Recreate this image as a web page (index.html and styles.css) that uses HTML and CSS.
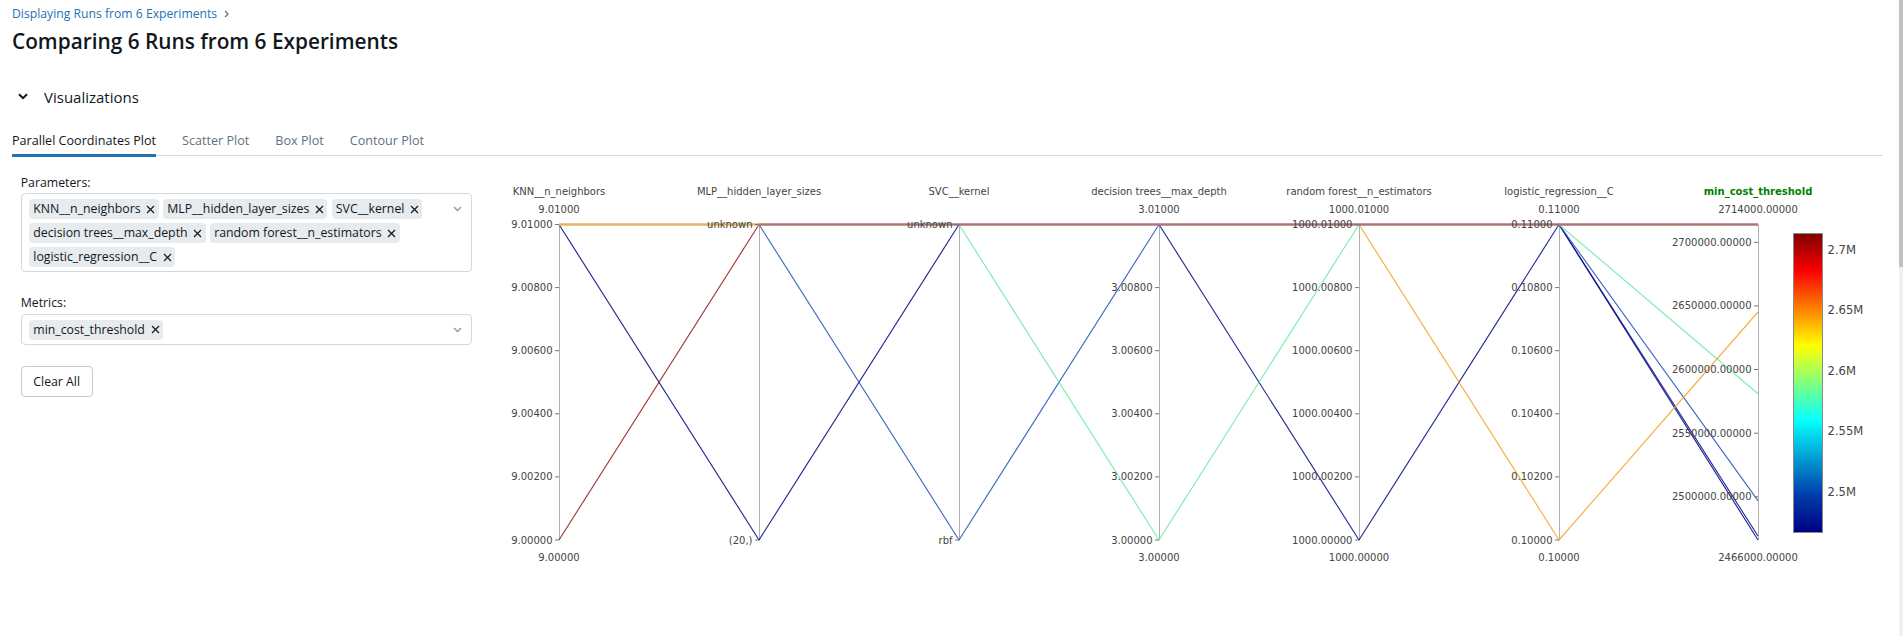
FILE: index.html
```html
<!DOCTYPE html>
<html>
<head>
<meta charset="utf-8">
<link rel="stylesheet" href="styles.css">
</head>
<body>
<div class="app">
  <main class="page">
    <nav class="breadcrumb">
      <span class="breadcrumb-link">Displaying Runs from 6 Experiments</span>
      <svg class="crumb-chev" width="5" height="8" viewBox="0 0 5 8"><path d="M1 1 L4 4 L1 7" /></svg>
    </nav>
    <h1 class="title">Comparing 6 Runs from 6 Experiments</h1>
    <div class="section-header">
      <svg class="section-chev" width="10" height="7" viewBox="0 0 10 7"><path d="M1 1.2 L5 5.2 L9 1.2" /></svg>
      <span class="section-title">Visualizations</span>
    </div>
    <div class="tabs">
      <div class="tab active">Parallel Coordinates Plot</div>
      <div class="tab">Scatter Plot</div>
      <div class="tab">Box Plot</div>
      <div class="tab">Contour Plot</div>
    </div>
    <div class="content">
      <aside class="controls">
        <div class="field-label">Parameters:</div>
        <div class="select">
          <div class="chips">
            <span class="chip">KNN__n_neighbors<svg class="x" width="9" height="9" viewBox="0 0 9 9"><path d="M1 1 L8 8 M8 1 L1 8"/></svg></span>
            <span class="chip">MLP__hidden_layer_sizes<svg class="x" width="9" height="9" viewBox="0 0 9 9"><path d="M1 1 L8 8 M8 1 L1 8"/></svg></span>
            <span class="chip">SVC__kernel<svg class="x" width="9" height="9" viewBox="0 0 9 9"><path d="M1 1 L8 8 M8 1 L1 8"/></svg></span>
            <span class="chip">decision trees__max_depth<svg class="x" width="9" height="9" viewBox="0 0 9 9"><path d="M1 1 L8 8 M8 1 L1 8"/></svg></span>
            <span class="chip">random forest__n_estimators<svg class="x" width="9" height="9" viewBox="0 0 9 9"><path d="M1 1 L8 8 M8 1 L1 8"/></svg></span>
            <span class="chip">logistic_regression__C<svg class="x" width="9" height="9" viewBox="0 0 9 9"><path d="M1 1 L8 8 M8 1 L1 8"/></svg></span>
          </div>
          <div class="caret"><svg width="9" height="6" viewBox="0 0 9 6"><path d="M1 1 L4.5 4.5 L8 1"/></svg></div>
        </div>
        <div class="field-label metrics-label">Metrics:</div>
        <div class="select">
          <div class="chips">
            <span class="chip">min_cost_threshold<svg class="x" width="9" height="9" viewBox="0 0 9 9"><path d="M1 1 L8 8 M8 1 L1 8"/></svg></span>
          </div>
          <div class="caret"><svg width="9" height="6" viewBox="0 0 9 6"><path d="M1 1 L4.5 4.5 L8 1"/></svg></div>
        </div>
        <button class="btn">Clear All</button>
      </aside>
      <svg class="plot" width="1403" height="420" viewBox="480 170 1403 420">
        <defs>
          <linearGradient id="jet" x1="0" y1="0" x2="0" y2="1">
            <stop offset="0" stop-color="rgb(128,0,0)"/>
            <stop offset="0.125" stop-color="rgb(250,0,0)"/>
            <stop offset="0.375" stop-color="rgb(255,255,0)"/>
            <stop offset="0.625" stop-color="rgb(5,255,255)"/>
            <stop offset="0.875" stop-color="rgb(0,60,170)"/>
            <stop offset="1" stop-color="rgb(0,0,131)"/>
          </linearGradient>
        </defs>

        <g class="axis-lines">
          <line x1="559.5" y1="224.5" x2="559.5" y2="540"/>
          <line x1="759.5" y1="224.5" x2="759.5" y2="540"/>
          <line x1="959.5" y1="224.5" x2="959.5" y2="540"/>
          <line x1="1159.5" y1="224.5" x2="1159.5" y2="540"/>
          <line x1="1359.5" y1="224.5" x2="1359.5" y2="540"/>
          <line x1="1559.5" y1="224.5" x2="1559.5" y2="540"/>
          <line x1="1758.5" y1="224.5" x2="1758.5" y2="540"/>
        </g>

        <g class="runs">
          <polyline stroke="rgb(0,0,131)" points="559,224.5 759,540 959,224.5 1159,224.5 1359,224.5 1559,224.5 1758,540"/>
          <polyline stroke="rgb(0,8,136)" points="559,224.5 759,224.5 959,224.5 1159,224.5 1359,540 1559,224.5 1758,536"/>
          <polyline stroke="rgb(30,80,185)" points="559,224.5 759,224.5 959,540 1159,224.5 1359,224.5 1559,224.5 1758,500.7"/>
          <polyline stroke="rgb(100,235,165)" points="559,224.5 759,224.5 959,224.5 1159,540 1359,224.5 1559,224.5 1758,393.7"/>
          <polyline stroke="rgb(245,160,30)" points="559,224.5 759,224.5 959,224.5 1159,224.5 1359,224.5 1559,540 1758,312"/>
          <polyline stroke="rgb(150,20,20)" points="559,540 759,224.5 959,224.5 1159,224.5 1359,224.5 1559,224.5 1758,224.5"/>
        </g>
        <g class="top-lines">
          <line stroke="rgb(226,180,100)" x1="559" y1="224.5" x2="759" y2="224.5"/>
          <line stroke="rgb(170,118,118)" x1="759" y1="224.5" x2="1758" y2="224.5"/>
        </g>

        <g class="ticks">
          <path d="M555 224.5H559M555 287.6H559M555 350.7H559M555 413.8H559M555 476.9H559M555 540H559"/>
          <path d="M755 224.5H759M755 540H759"/>
          <path d="M955 224.5H959M955 540H959"/>
          <path d="M1155 287.6H1159M1155 350.7H1159M1155 413.8H1159M1155 476.9H1159M1155 540H1159"/>
          <path d="M1355 224.5H1359M1355 287.6H1359M1355 350.7H1359M1355 413.8H1359M1355 476.9H1359M1355 540H1359"/>
          <path d="M1555 224.5H1559M1555 287.6H1559M1555 350.7H1559M1555 413.8H1559M1555 476.9H1559M1555 540H1559"/>
          <path d="M1754 242.3H1758M1754 305.9H1758M1754 369.5H1758M1754 433.2H1758M1754 496.8H1758"/>
        </g>

        <g class="axis-title">
          <text x="559" y="195.4">KNN__n_neighbors</text>
          <text x="759" y="195.4">MLP__hidden_layer_sizes</text>
          <text x="959" y="195.4">SVC__kernel</text>
          <text x="1159" y="195.4">decision trees__max_depth</text>
          <text x="1359" y="195.4">random forest__n_estimators</text>
          <text x="1559" y="195.4">logistic_regression__C</text>
          <text class="metric-title" x="1758" y="195.4">min_cost_threshold</text>
        </g>

        <g class="range-label">
          <text x="559" y="213.3">9.01000</text>
          <text x="1159" y="213.3">3.01000</text>
          <text x="1359" y="213.3">1000.01000</text>
          <text x="1559" y="213.3">0.11000</text>
          <text x="1758" y="213.3">2714000.00000</text>
          <text x="559" y="560.7">9.00000</text>
          <text x="1159" y="560.7">3.00000</text>
          <text x="1359" y="560.7">1000.00000</text>
          <text x="1559" y="560.7">0.10000</text>
          <text x="1758" y="560.7">2466000.00000</text>
        </g>

        <g class="tick-label">
          <text x="552.5" y="228">9.01000</text>
          <text x="552.5" y="291.1">9.00800</text>
          <text x="552.5" y="354.2">9.00600</text>
          <text x="552.5" y="417.3">9.00400</text>
          <text x="552.5" y="480.4">9.00200</text>
          <text x="552.5" y="543.5">9.00000</text>

          <text x="752.5" y="228">unknown</text>
          <text x="752.5" y="543.5">(20,)</text>

          <text x="952.5" y="228">unknown</text>
          <text x="952.5" y="543.5">rbf</text>

          <text x="1152.5" y="291.1">3.00800</text>
          <text x="1152.5" y="354.2">3.00600</text>
          <text x="1152.5" y="417.3">3.00400</text>
          <text x="1152.5" y="480.4">3.00200</text>
          <text x="1152.5" y="543.5">3.00000</text>

          <text x="1352.5" y="228">1000.01000</text>
          <text x="1352.5" y="291.1">1000.00800</text>
          <text x="1352.5" y="354.2">1000.00600</text>
          <text x="1352.5" y="417.3">1000.00400</text>
          <text x="1352.5" y="480.4">1000.00200</text>
          <text x="1352.5" y="543.5">1000.00000</text>

          <text x="1552.5" y="228">0.11000</text>
          <text x="1552.5" y="291.1">0.10800</text>
          <text x="1552.5" y="354.2">0.10600</text>
          <text x="1552.5" y="417.3">0.10400</text>
          <text x="1552.5" y="480.4">0.10200</text>
          <text x="1552.5" y="543.5">0.10000</text>

          <text x="1751.5" y="245.8">2700000.00000</text>
          <text x="1751.5" y="309.4">2650000.00000</text>
          <text x="1751.5" y="373">2600000.00000</text>
          <text x="1751.5" y="436.7">2550000.00000</text>
          <text x="1751.5" y="500.3">2500000.00000</text>
        </g>

        <rect class="colorbar" x="1793.5" y="233.5" width="29" height="299" fill="url(#jet)"/>
        <g class="cb-label">
          <text x="1827.5" y="253.9">2.7M</text>
          <text x="1827.5" y="314.4">2.65M</text>
          <text x="1827.5" y="374.9">2.6M</text>
          <text x="1827.5" y="435.4">2.55M</text>
          <text x="1827.5" y="495.9">2.5M</text>
        </g>
      </svg>
    </div>
  </main>
  <div class="scrollbar"><div class="thumb"></div></div>
</div>
</body>
</html>
```
FILE: styles.css
```css
html, body {
  margin: 0;
  padding: 0;
  background: #ffffff;
}
body {
  font-family: "Open Sans", "Noto Sans", sans-serif;
  color: #11171c;
  overflow: hidden;
}
.app {
  display: flex;
  height: 636px;
}
.page {
  flex: 1;
  min-width: 0;
  padding: 0 16px 0 12px;
}
.scrollbar {
  width: 4px;
  background: #f1f1f1;
}
.thumb {
  height: 267px;
  background: #c1c1c1;
}

/* breadcrumb */
.breadcrumb {
  display: flex;
  align-items: center;
  gap: 7px;
  margin-top: 5px;
  height: 18px;
  font-size: 12.2px;
  line-height: 18px;
}
.breadcrumb-link {
  color: #2272b4;
}
.crumb-chev path {
  fill: none;
  stroke: #5f7281;
  stroke-width: 1.3;
}

.title {
  margin: 3px 0 0;
  font-size: 20.8px;
  line-height: 30px;
  font-weight: 600;
  color: #11171c;
}

/* section header */
.section-header {
  display: flex;
  align-items: center;
  height: 24px;
  margin-top: 28.9px;
}
.section-chev {
  margin-left: 5.5px;
}
.section-chev path {
  fill: none;
  stroke: #11171c;
  stroke-width: 2;
}
.section-title {
  margin-left: 16.5px;
  font-size: 15px;
  line-height: 24px;
  color: #11171c;
}

/* tabs */
.tabs {
  display: flex;
  gap: 26px;
  margin-top: 22.2px;
  border-bottom: 1px solid #d1d9e1;
}
.tab {
  position: relative;
  font-size: 12.6px;
  line-height: 20px;
  padding-bottom: 4px;
  color: #5f7281;
}
.tab.active {
  color: #11171c;
}
.tab.active::after {
  content: "";
  position: absolute;
  left: 0;
  right: 0;
  bottom: -2px;
  height: 3px;
  background: #2272b4;
}

/* content */
.content {
  display: flex;
  align-items: flex-start;
  margin-top: 14px;
}
.controls {
  width: 468px;
  flex: none;
  box-sizing: border-box;
  padding: 3.5px 0 0 8.7px;
}
.field-label {
  font-size: 12.3px;
  line-height: 18px;
  color: #11171c;
}
.metrics-label {
  margin-top: 21.6px;
}
.select {
  width: 451px;
  box-sizing: border-box;
  display: flex;
  align-items: flex-start;
  margin-top: 1.7px;
  padding: 5px 0 4px 7.3px;
  border: 1px solid #d1d9e1;
  border-radius: 4px;
}
.chips {
  flex: 1;
  display: flex;
  flex-wrap: wrap;
  gap: 4px 4.3px;
}
.chip {
  display: inline-flex;
  align-items: center;
  gap: 5.7px;
  height: 20px;
  padding: 0 3.3px 0 4.3px;
  background: #e8ebee;
  border-radius: 4px;
  font-size: 12.3px;
  line-height: 20px;
  color: #11171c;
}
.chip .x path {
  fill: none;
  stroke: #11171c;
  stroke-width: 1.2;
}
.caret {
  width: 27px;
  height: 20px;
  display: flex;
  align-items: center;
  justify-content: center;
  flex: none;
}
.caret path {
  fill: none;
  stroke: #8b9aa8;
  stroke-width: 1.4;
}
.btn {
  display: block;
  margin-top: 21.4px;
  height: 31px;
  padding: 0 11.6px;
  box-sizing: border-box;
  background: #ffffff;
  border: 1px solid #c0cad4;
  border-radius: 4px;
  font-family: "Open Sans", "Noto Sans", sans-serif;
  font-size: 12.3px;
  line-height: 29px;
  color: #11171c;
}

/* plot */
.plot {
  display: block;
  flex: none;
}
.axis-lines line {
  stroke: #b0b0b0;
  stroke-width: 1;
}
.runs polyline {
  fill: none;
  stroke-width: 1.15;
  stroke-opacity: 0.85;
}
.top-lines line {
  stroke-width: 2.6;
}
.ticks path {
  stroke: #777777;
  stroke-width: 1;
  fill: none;
}
.axis-title text,
.range-label text {
  font-family: "DejaVu Sans", Verdana, sans-serif;
  font-size: 10px;
  fill: #444444;
  text-anchor: middle;
}
.axis-title .metric-title {
  fill: #008000;
  font-weight: bold;
}
.tick-label text {
  font-family: "DejaVu Sans", Verdana, sans-serif;
  font-size: 10px;
  fill: #444444;
  text-anchor: end;
}
.colorbar {
  stroke: #888888;
  stroke-width: 1;
}
.cb-label text {
  font-family: "DejaVu Sans", Verdana, sans-serif;
  font-size: 11.6px;
  fill: #444444;
}
```
